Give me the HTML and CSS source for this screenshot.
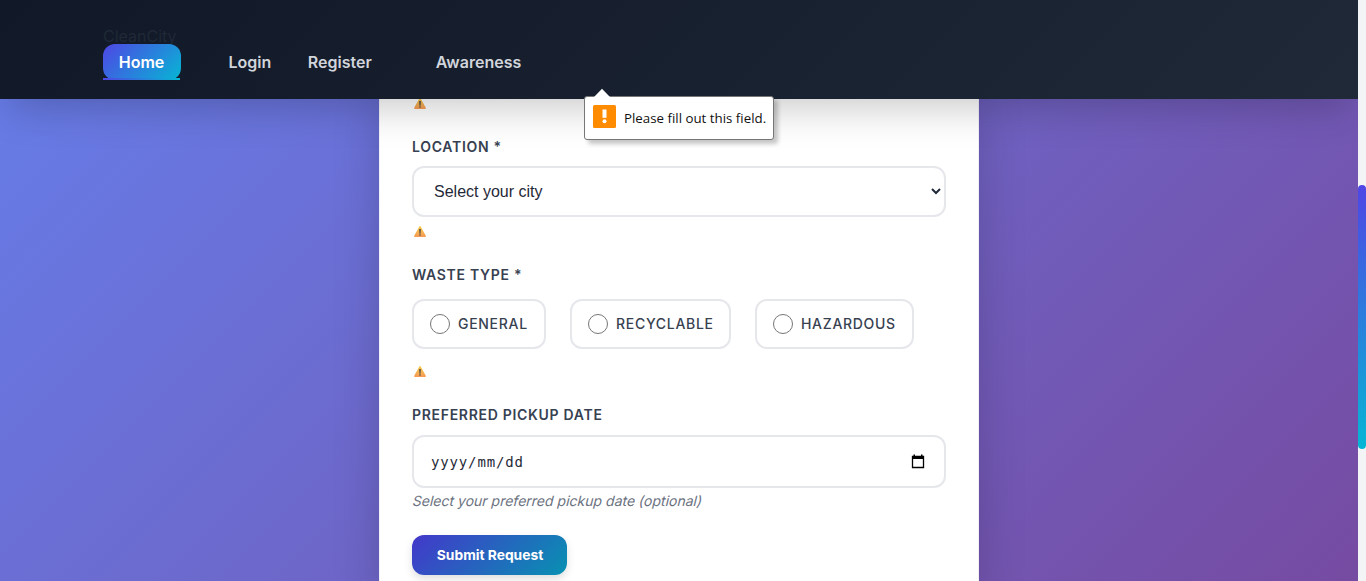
FILE: index.html
```html
<!DOCTYPE html>
<html lang="en">
<head>
<meta charset="utf-8">
<title>CleanCity</title>
<link rel="stylesheet" href="styles.css">
</head>
<body>
<svg class="defs" width="0" height="0" aria-hidden="true">
  <defs><linearGradient id="amber" x1="0" y1="0" x2="0" y2="1"><stop offset="0" stop-color="#f8cf4c"/><stop offset="1" stop-color="#f59a55"/></linearGradient></defs>
  <symbol id="warning" viewBox="0 0 12 11"><path d="M5.300.5Q6-.4 6.700.5L11.800 9.700Q12.200 11 11 11H1Q-.2 11 .2 9.700Z" fill="url(#amber)"/><path d="M5.200 3h1.600L6.500 7.700h-1z" fill="#4b4644"/><circle cx="6" cy="9" r=".8" fill="#4b4644"/></symbol>
</svg>
<div class="window">
  <div class="page">
    <header class="header">
      <div class="brand">CleanCity</div>
      <nav class="nav">
        <a class="link active">Home</a>
        <a class="link login">Login</a>
        <a class="link register">Register</a>
        <a class="link awareness">Awareness</a>
      </nav>
      <div class="tooltip" role="alert">
        <svg class="tip-arrow" width="18" height="9" viewBox="0 0 18 9"><path d="M1 9L9 .8 17 9Z" fill="#fff"/></svg>
        <svg class="tip-icon" width="23" height="23" viewBox="0 0 23 23"><rect width="23" height="23" rx="1.500" fill="#ff8c00"/><path d="M9.500 4.500h4v8.300h-4z" fill="#fff"/><circle cx="11.500" cy="16.300" r="2" fill="#fff"/></svg>
        <span class="tip-text">Please fill out this field.</span>
      </div>
    </header>
    <main class="main">
      <form class="card">
        <svg class="warn first"><use href="#warning"/></svg>
        <div class="label">Location *</div>
        <div class="control select"><span>Select your city</span>
          <svg width="10" height="7" viewBox="0 0 10 7"><path d="M1 1l4 4 4-4" fill="none" stroke="#1f2937" stroke-width="2"/></svg>
        </div>
        <svg class="warn"><use href="#warning"/></svg>
        <div class="label waste">Waste Type *</div>
        <div class="options">
          <label class="option general"><i class="radio"></i><span>General</span></label>
          <label class="option recyclable"><i class="radio"></i><span>Recyclable</span></label>
          <label class="option hazardous"><i class="radio"></i><span>Hazardous</span></label>
        </div>
        <svg class="warn after-options"><use href="#warning"/></svg>
        <div class="label pickup">Preferred Pickup Date</div>
        <div class="control date"><span>yyyy/mm/dd</span>
          <svg width="14" height="15" viewBox="0 0 14 15"><path d="M1.500 2.500h11v11h-11z" fill="none" stroke="#000" stroke-width="1.300"/><path d="M1 2h12v3H1zM2.500.5h1.500V2H2.500zM10 .5h1.500V2H10z"/></svg>
        </div>
        <div class="hint">Select your preferred pickup date (optional)</div>
        <button class="submit" type="button">Submit Request</button>
      </form>
    </main>
  </div>
  <div class="scrollbar"><div class="thumb"></div></div>
</div>
</body>
</html>
```
FILE: styles.css
```css
* { box-sizing: border-box; }
body { margin: 0; overflow: hidden; font-family: Inter, sans-serif; color: #1f2937; }
.defs { position: absolute; }
.window { display: flex; width: 1366px; height: 581px; }
.page {
  display: flex; flex-direction: column; width: 1358px; height: 581px; overflow: hidden;
  background: linear-gradient(135deg, #667eea 0%, #764ba2 100%);
}
.header {
  position: relative; z-index: 2; flex: none; height: 99px; padding: 26px 103px 0;
  background: linear-gradient(135deg, #111827, #1f2937);
  box-shadow: 0 16px 40px -8px rgba(0, 0, 0, .22);
}
.brand { height: 18px; font-size: 16px; line-height: 21px; color: #1f2937; }
.nav { display: flex; height: 36px; font-size: 16px; font-weight: 600; line-height: 36px; }
.link { color: #d1d5db; }
.active {
  position: relative; width: 78px; height: 36px; padding-right: 1px; text-align: center; color: #fff;
  border-radius: 12px; background: linear-gradient(135deg, #4f46e5, #06b6d4);
}
.active::after {
  content: ""; position: absolute; left: 0; right: 1px; bottom: 0; height: 2px;
  background: linear-gradient(90deg, #4f46e5, #06b6d4);
}
.login { margin-left: 47.4px; width: 43px; }
.register { margin-left: 36.4px; width: 64px; }
.awareness { margin-left: 64px; }
.tooltip {
  position: absolute; left: 584px; top: 96px; width: 190px; height: 44px;
  display: flex; align-items: center; padding: 0 8px 3px; gap: 8px;
  background: #fff; border: 1px solid #767676; border-radius: 3px;
  box-shadow: 4px 4px 4px rgba(0, 0, 0, .22);
}
.tip-arrow { position: absolute; left: 8px; top: -9px; }
.tip-icon { flex: none; }
.tip-text { font: 13.3px/20px "Open Sans", sans-serif; color: #111; white-space: nowrap; padding-top: 2px; }
.main { flex: 1; display: flex; justify-content: center; min-height: 0; }
.card {
  display: flex; flex-direction: column; width: 600px; height: 500px; flex: none; padding: 0 32px;
  border: solid #f1f0f6; border-width: 0 1px;
  background: #fff; box-shadow: 0 0 44px rgba(0, 0, 0, .18);
}
.warn { display: block; flex: none; width: 12px; height: 11px; margin: 9px 0 0 2px; }
.warn.first { margin-top: -1px; }
.label {
  height: 18px; margin-top: 29px; font-size: 14px; line-height: 18px; font-weight: 600;
  letter-spacing: .7px; text-transform: uppercase; color: #374151;
}
.control {
  display: flex; align-items: center; justify-content: space-between; flex: none;
  width: 534px; border: 2px solid #e5e7eb; border-radius: 12px; background: #fff;
}
.select { height: 51px; margin-top: 10px; padding: 0 3px 0 20px; font: 16px "Liberation Sans", sans-serif; }
.waste { margin-top: 29px; }
.options { display: flex; gap: 24px; margin-top: 15px; }
.option {
  display: flex; align-items: center; height: 50px; padding-left: 16px; gap: 8px;
  border: 2px solid #e5e7eb; border-radius: 12px;
  font-size: 14px; font-weight: 500; letter-spacing: .7px; text-transform: uppercase; color: #374151;
}
.option span { padding-bottom: 1px; }
.general { width: 134px; }
.recyclable { width: 161px; }
.hazardous { width: 159px; }
.radio { flex: none; width: 20px; height: 20px; border: 1px solid #767676; border-radius: 50%; }
.after-options { margin-top: 17px; }
.pickup { margin-top: 29px; }
.date { height: 53px; margin-top: 11px; padding: 0 19px 0 17px; font: 14px "DejaVu Sans Mono", monospace; letter-spacing: .85px; }
.date svg { margin-bottom: 1px; }
.hint {
  align-self: flex-start; margin: 3px 0 0 1px; height: 20px; font-size: 14px; line-height: 20px;
  letter-spacing: .01px; color: #6b7280; transform: skewX(-14deg);
}
.submit {
  flex: none; width: 155px; height: 40px; margin-top: 24px; padding: 0 0 1px 1px; border: 0; border-radius: 12px;
  font: 700 13.8px Inter, sans-serif; color: #fff;
  background: linear-gradient(135deg, #4338ca, #0891b2);
  box-shadow: 0 4px 8px rgba(0, 0, 0, .13);
}
.scrollbar { width: 8px; padding-top: 185px; background: #f3f4f6; }
.thumb { height: 264px; border-radius: 4px; background: linear-gradient(#4f46e5, #06b6d4); }
```
